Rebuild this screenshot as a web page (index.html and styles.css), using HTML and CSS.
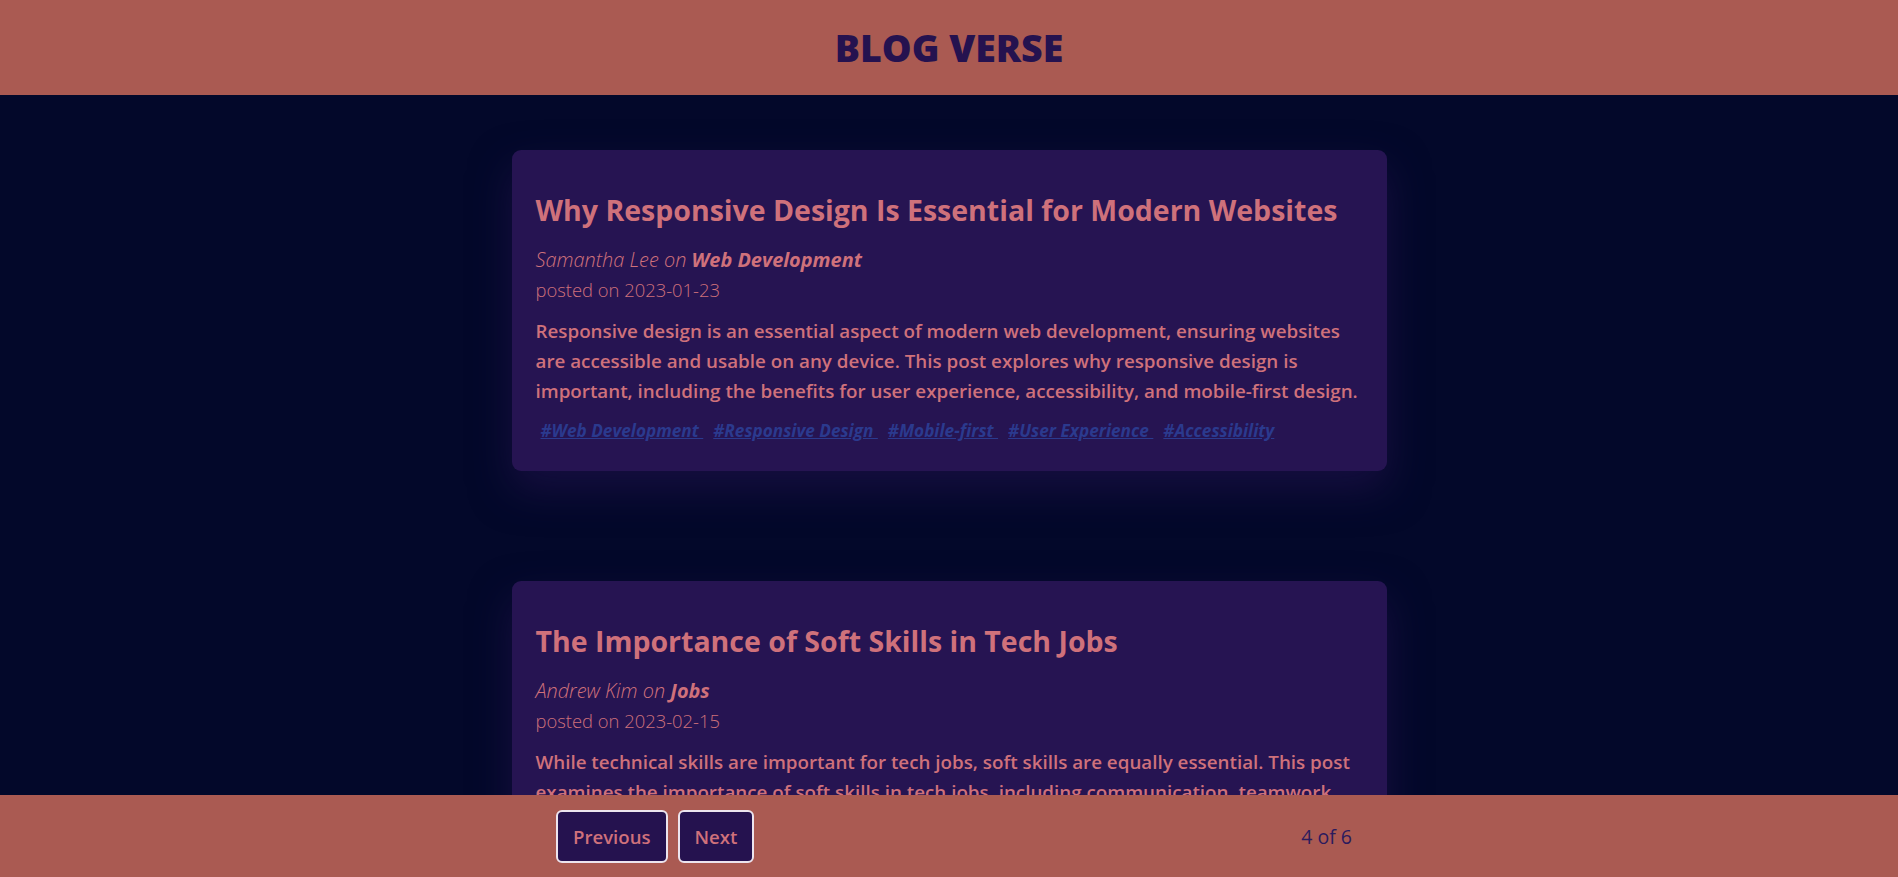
FILE: index.html
```html
<!DOCTYPE html>
<html lang="en">
<head>
<meta charset="utf-8">
<title>Blog Verse</title>
<link rel="stylesheet" href="styles.css">
</head>
<body>
<header class="site-header">
  <h1 class="brand">BLOG VERSE</h1>
</header>
<main class="posts">
  <article class="post">
    <h2 class="post-title">Why Responsive Design Is Essential for Modern Websites</h2>
    <p class="post-meta"><span class="author">Samantha Lee on </span><strong class="category">Web Development</strong></p>
    <p class="post-date">posted on 2023-01-23</p>
    <p class="post-body">Responsive design is an essential aspect of modern web development, ensuring websites are accessible and usable on any device. This post explores why responsive design is important, including the benefits for user experience, accessibility, and mobile-first design.</p>
    <div class="tags">
      <a class="tag" href="#">#Web Development </a>
      <a class="tag" href="#">#Responsive Design </a>
      <a class="tag" href="#">#Mobile-first </a>
      <a class="tag" href="#">#User Experience </a>
      <a class="tag" href="#">#Accessibility</a>
    </div>
  </article>
  <article class="post">
    <h2 class="post-title">The Importance of Soft Skills in Tech Jobs</h2>
    <p class="post-meta"><span class="author">Andrew Kim on </span><strong class="category">Jobs</strong></p>
    <p class="post-date">posted on 2023-02-15</p>
    <p class="post-body">While technical skills are important for tech jobs, soft skills are equally essential. This post examines the importance of soft skills in tech jobs, including communication, teamwork, problem-solving, and adaptability, and how to develop them.</p>
    <div class="tags">
      <a class="tag" href="#">#Jobs </a>
      <a class="tag" href="#">#Soft Skills </a>
      <a class="tag" href="#">#Career </a>
    </div>
  </article>
</main>
<footer class="pager">
  <div class="pager-inner">
    <div class="pager-buttons">
      <button class="pager-btn">Previous</button>
      <button class="pager-btn">Next</button>
    </div>
    <span class="pager-count">4 of 6</span>
  </div>
</footer>
</body>
</html>
```
FILE: styles.css
```css
* { box-sizing: border-box; }
html, body { margin: 0; padding: 0; }
body {
  background: #03082a;
  font-family: "Open Sans", "Noto Sans", sans-serif;
  color: #cf717b;
}
.site-header {
  height: 95px;
  background: #aa5a52;
  display: flex;
  align-items: center;
  justify-content: center;
}
.brand {
  margin: 0;
  font-size: 37.5px;
  font-weight: 800;
  color: #25124f;
}
.posts {
  display: flex;
  flex-direction: column;
  align-items: center;
  gap: 110px;
  padding: 55px 0 140px;
}
.post {
  width: 875px;
  background: #261452;
  border-radius: 9px;
  padding: 26px 24px 24px;
  box-shadow: 0 18px 40px rgba(38, 20, 82, 0.55);
}
.post-title {
  margin: 15px 0 15px;
  font-size: 28.5px;
  font-weight: 700;
  line-height: 1.362;
  color: #cf717b;
}
.post-meta {
  margin: 0;
  font-size: 19.9px;
  font-style: italic;
  font-weight: 300;
  line-height: 30px;
}
.category { font-weight: 700; }
.post-date {
  margin: 0;
  font-size: 18.4px;
  font-weight: 300;
  line-height: 30px;
}
.post-body {
  margin: 11px 0 0;
  font-size: 18.8px;
  font-weight: 600;
  line-height: 30px;
}
.tags {
  display: flex;
  flex-wrap: wrap;
  margin-top: 9px;
  line-height: 32px;
}
.tag {
  margin: 0 5px;
  font-size: 17.2px;
  font-style: italic;
  font-weight: 700;
  color: #2b3a8e;
  text-decoration: underline;
  white-space: pre;
}
.pager {
  position: fixed;
  left: 0;
  right: 0;
  bottom: 0;
  height: 82px;
  background: #aa5a52;
  display: flex;
  align-items: center;
  justify-content: center;
}
.pager-inner {
  width: 796px;
  margin-left: 10px;
  display: flex;
  align-items: center;
  justify-content: space-between;
}
.pager-buttons {
  display: flex;
  gap: 10px;
}
.pager-btn {
  height: 53px;
  padding: 0 15px;
  background: #25124f;
  color: #cf717b;
  border: 2px solid #ece4ee;
  border-radius: 6px;
  font-family: inherit;
  font-size: 18.6px;
  font-weight: 600;
}
.pager-count {
  font-size: 19.5px;
  color: #2b1a5e;
}
```
